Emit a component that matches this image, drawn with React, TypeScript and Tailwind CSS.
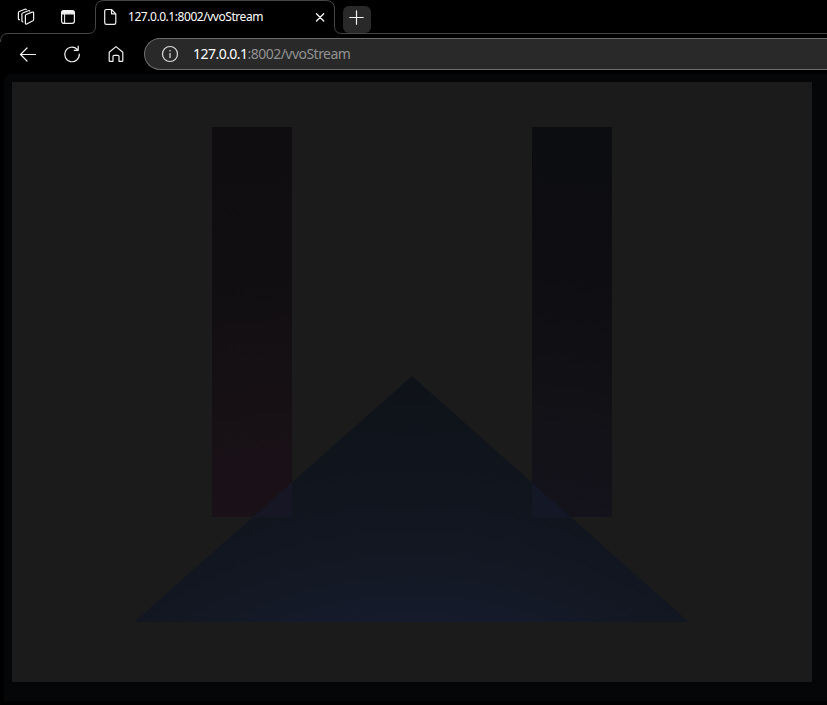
const stroke = { fill: 'none', stroke: '#f2f2f2', strokeWidth: 1.2, strokeLinecap: 'round', strokeLinejoin: 'round' } as const;

function TabStrip() {
  return (
    <header className="relative flex h-[34px] shrink-0 items-start">
      <svg className="absolute left-0 top-0" width="827" height="44" fill="none" stroke="#454545">
        <path d="M0.5 42 Q0.5 33.5 8 33.5 H88 Q95.5 33.5 95.5 26 V9 Q95.5 0.5 104 0.5 H326 Q334.5 0.5 334.5 9 V26 Q334.5 33.5 342 33.5 H827" />
      </svg>
      <div className="flex h-[34px] w-[95px] items-center gap-[25px] pl-[17px]">
        <svg width="18" height="18" {...stroke}>
          <path d="M8.4 7.6 Q8.4 6.8 9.1 6.5 L15.3 4.1 Q16.6 3.7 16.6 4.9 V11.6 Q16.6 12.4 15.9 12.8 L9.7 16 Q8.4 16.5 8.4 15.3 Z" />
          <path d="M5.9 13.8 Q4.9 13.8 4.9 12.8 V6.2 Q4.9 5.3 5.7 5 L11.4 2.7 Q12.4 2.4 12.8 3" />
          <path d="M2.5 11.7 Q1.4 11.7 1.4 10.7 V4.7 Q1.4 3.8 2.2 3.5 L7.9 1.3 Q8.9 1 9.3 1.6" />
        </svg>
        <svg width="16" height="16" {...stroke}>
          <rect x="1.6" y="1.6" width="12.8" height="12.8" rx="2.3" />
          <path d="M2 3 Q2 2 3 2 H13 Q14 2 14 3 V4.8 H2Z" fill="#f2f2f2" />
          <path d="M4.6 5 V14" strokeWidth="1" />
        </svg>
      </div>
      <div className="flex h-[34px] w-[240px] items-center pl-[9px] pr-[8px]">
        <svg width="14" height="18" {...stroke}>
          <path d="M7.5 1.5 H2.5 Q0.7 1.5 0.7 3.3 V14.7 Q0.7 16.4 2.5 16.4 H10 Q11.8 16.4 11.8 14.7 V5.8 Z M7.5 1.5 V5.8 H11.8" />
        </svg>
        <span className="ml-[10px] whitespace-nowrap text-[12px] leading-[16px] tracking-[-0.45px] text-white">127.0.0.1:8002/vvoStream</span>
        <svg className="ml-auto" width="14" height="14" {...stroke} strokeWidth={1.4}>
          <path d="M3.5 3.8 L10.7 11 M10.7 3.8 L3.5 11" />
        </svg>
      </div>
      <button className="ml-[8px] mt-[6px] flex h-[27px] w-[28px] items-center rounded-[6px] bg-[#292929] pl-[6px]">
        <svg className="-mt-[5px]" width="15" height="15" {...stroke}>
          <path d="M7.5 0.8 V14.2 M0.8 7.5 H14.2" />
        </svg>
      </button>
    </header>
  );
}

function Toolbar() {
  return (
    <nav className="flex h-10 shrink-0 items-center pl-[19px]">
      <svg width="18" height="18" {...stroke}>
        <path d="M16.5 9.5 H1.5 M8 3 L1.5 9.5 L8 16" />
      </svg>
      <svg className="ml-[26px]" width="18" height="18" {...stroke}>
        <path d="M14.1 4.2 A7.3 7.3 0 1 0 16.3 9 M15.2 1.2 V5.3 H11.2" />
      </svg>
      <svg className="ml-[26px]" width="18" height="18" {...stroke}>
        <path d="M2.2 15.7 V7.2 L9 1.6 L15.8 7.2 V15.7 Q15.8 16.3 15 16.3 H12 V11.5 Q12 10.3 10.8 10.3 H7.2 Q6 10.3 6 11.5 V16.3 H3 Q2.2 16.3 2.2 15.7Z" />
      </svg>
      <div className="ml-[19px] flex h-8 flex-1 items-center rounded-l-full border border-r-0 border-[#6c6c6c] bg-[#292929] pl-[16px]">
        <svg width="18" height="18" fill="none" stroke="#dedede" strokeWidth="1.2">
          <circle cx="9" cy="9" r="7.5" />
          <path d="M9 8 V13 M9 5 V6.5" />
        </svg>
        <span className="ml-[14px] whitespace-nowrap text-[14px] leading-5 tracking-[-0.53px] text-[#929292]">
          <span className="text-white">127.0.0.1</span>:8002/vvoStream
        </span>
      </div>
    </nav>
  );
}

function Scene() {
  return (
    <svg className="block" width="800" height="600">
      <defs>
        <radialGradient id="floor" gradientUnits="userSpaceOnUse" cx="400" cy="900" r="610">
          <stop offset="0.59" stopColor="#161b2d" />
          <stop offset="0.68" stopColor="#131824" />
          <stop offset="0.8" stopColor="#11151e" />
          <stop offset="1" stopColor="#0e1218" />
        </radialGradient>
        <radialGradient id="left" gradientUnits="userSpaceOnUse" cx="400" cy="1400" r="1360">
          <stop offset="0.71" stopColor="#1b1118" />
          <stop offset="0.82" stopColor="#151014" />
          <stop offset="0.9" stopColor="#100e11" />
          <stop offset="1" stopColor="#0f0d10" />
        </radialGradient>
        <radialGradient id="right" gradientUnits="userSpaceOnUse" cx="400" cy="1400" r="1360">
          <stop offset="0.71" stopColor="#14131c" />
          <stop offset="0.82" stopColor="#111115" />
          <stop offset="0.9" stopColor="#0e0e12" />
          <stop offset="1" stopColor="#0c0d10" />
        </radialGradient>
        <clipPath id="triangle">
          <path d="M400 294 L677 540 H122 Z" />
        </clipPath>
      </defs>
      <rect x="200" y="45" width="80" height="390" fill="url(#left)" />
      <rect x="520" y="45" width="80" height="390" fill="url(#right)" />
      <path d="M400 294 L677 540 H122 Z" fill="url(#floor)" />
      <g clipPath="url(#triangle)">
        <rect x="200" y="45" width="80" height="390" fill="#171624" />
        <rect x="520" y="45" width="80" height="390" fill="#131726" />
      </g>
    </svg>
  );
}

export default function App() {
  return (
    <div className="flex h-[705px] w-[827px] flex-col overflow-hidden bg-black font-['Noto_Sans',sans-serif]">
      <TabStrip />
      <Toolbar />
      <main className="ml-1 h-[627px] rounded-tl-lg bg-[#040608] p-2">
        <div className="h-[600px] w-[800px] bg-[#1b1b1b]">
          <Scene />
        </div>
      </main>
    </div>
  );
}
